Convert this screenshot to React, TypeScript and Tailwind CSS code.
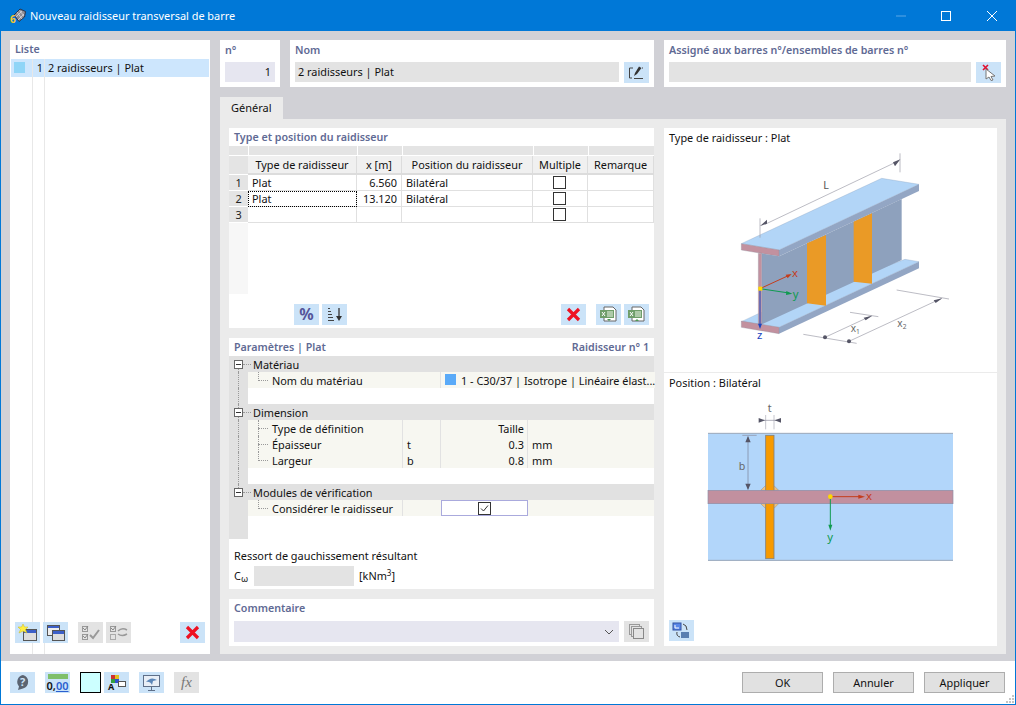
const font = { fontFamily: '"Noto Sans", sans-serif' };

function IconBtn({ children, off, className }: { children?: React.ReactNode; off?: boolean; className?: string }) {
  return (
    <div className={`w-[25px] h-[21px] flex items-center justify-center shrink-0 ${off ? "bg-[#e3e3e3]" : "bg-[#cbe3f8]"} ${className ?? ""}`}>
      {children}
    </div>
  );
}

const RedX = () => (
  <svg width="15" height="15" viewBox="0 0 15 15">
    <path d="M2 2 L13 13 M13 2 L2 13" stroke="#ee1122" strokeWidth="3.2" />
  </svg>
);

const Excel = ({ up }: { up?: boolean }) => (
  <svg width="19" height="18" viewBox="0 0 19 18">
    <path d="M5 1 H14 L17 4 V15 H5 Z" fill="#fff" stroke="#666" />
    <rect x="1" y="4" width="14" height="8" fill="#6f9e6a" />
    <path d="M3 6 L6 10 M6 6 L3 10" stroke="#fff" />
    <path d="M8 6 H14 M8 8 H14 M8 10 H14 M9 5 V11 M11 5 V11 M13 5 V11" stroke="#dcebd8" strokeWidth="0.7" />
    <path d={up ? "M8 15 L10 13 L12 15 Z" : "M8 13 L12 13 L10 15 Z"} fill="#4c9a54" />
  </svg>
);

function Check() {
  return <div className="w-[13px] h-[13px] border border-[#333] bg-white" />;
}

function Title({ children }: { children: React.ReactNode }) {
  return <div className="text-[10.7px] font-semibold text-[#5f6a94] leading-[16px] whitespace-nowrap">{children}</div>;
}

function TableRow({ n, type, x, pos, focus }: { n: string; type?: string; x?: string; pos?: string; focus?: boolean }) {
  const cell = "border-r border-b border-[#e0e0e0] h-[16px] leading-[15px] text-[10.9px] text-[#111]";
  return (
    <>
      <div className="bg-[#e4e4e4] border-b border-white text-center text-[10.9px] leading-[15px] text-[#222] h-[16px]">{n}</div>
      <div className={`${cell} pl-[4px] ${focus ? "outline-1 outline-dotted outline-black -outline-offset-1" : ""}`}>{type}</div>
      <div className={`${cell} text-right pr-[4px]`}>{x}</div>
      <div className={`${cell} pl-[4px]`}>{pos}</div>
      <div className={`${cell} flex items-center justify-center pr-[1px]`}><Check /></div>
      <div className={cell}></div>
    </>
  );
}

function Gutter({ line }: { line?: boolean }) {
  return (
    <div className="w-[19px] shrink-0 bg-[#e1e1e1] pl-[9px]">
      {line && <div className="h-full border-l border-dotted border-[#999]" />}
    </div>
  );
}

function GroupRow({ label, first, last }: { label: string; first?: boolean; last?: boolean }) {
  return (
    <div className="flex h-[16px] bg-[#e1e1e1] relative">
      {/* dotted links of the tree, behind the +/- box */}
      {!first && <div className="absolute left-[9px] top-0 h-[4px] border-l border-dotted border-[#999]" />}
      {!last && <div className="absolute left-[9px] top-[12px] h-[4px] border-l border-dotted border-[#999]" />}
      <div className="absolute left-[14px] top-[8px] w-[8px] border-t border-dotted border-[#999]" />
      <div className="w-[19px] shrink-0 flex items-center pl-[5px] relative">
        <svg width="9" height="9" viewBox="0 0 9 9">
          <rect x="0.5" y="0.5" width="8" height="8" fill="#fff" stroke="#666" />
          <path d="M2 4.5 H7" stroke="#333" />
        </svg>
      </div>
      <div className="text-[10.9px] leading-[18px] text-[#111] pl-[5px]">{label}</div>
    </div>
  );
}

function Branch({ last }: { last?: boolean }) {
  return (
    <>
      <div className={`absolute left-[10px] top-0 border-l border-dotted border-[#999] ${last ? "h-[9px]" : "h-[16px]"}`} />
      <div className="absolute left-[10px] top-[8px] w-[10px] border-t border-dotted border-[#999]" />
    </>
  );
}

function ParamRow({ label, sym, val, unit, last }: { label: string; sym?: string; val?: string; unit?: string; last?: boolean }) {
  return (
    <div className="flex h-[16px] text-[10.9px] leading-[18px] text-[#111]">
      <Gutter line />
      <div className="w-[155px] shrink-0 bg-[#f7f7f1] pl-[24px] border-r border-[#e2e2e2] relative">
        <Branch last={last} />
        {label}
      </div>
      <div className="w-[38px] shrink-0 bg-[#f7f7f1] pl-[4px] border-r border-[#e2e2e2]">{sym}</div>
      <div className="w-[87px] shrink-0 bg-[#f7f7f1] text-right pr-[3px] border-r border-[#e2e2e2]">{val}</div>
      <div className="flex-1 bg-[#f7f7f1] pl-[4px]">{unit}</div>
    </div>
  );
}

function BlankRow({ h = "h-[16px]", line }: { h?: string; line?: boolean }) {
  return (
    <div className={`flex ${h}`}>
      <Gutter line={line} />
    </div>
  );
}

function BeamDrawing() {
  return (
    <svg width="333" height="224" viewBox="-3 69 999 672" className="block">
      <path d="M229 356 L650 160 L762 178 L342 375 Z" fill="#b2d5f7" stroke="#8fa3c0" />
      <path d="M342 375 L762 178 V198 L342 394 Z" fill="#93a6c4" />
      <path d="M229 356 L342 375 V394 L229 375 Z" fill="#c2919f" stroke="#8f8f9f" />
      <path d="M229 590 L280 566 L720 403 L762 410 L342 607 Z" fill="#b2d5f7" stroke="#8fa3c0" />
      <path d="M290 385 L342 394 L710 222 V405 L290 598 Z" fill="#8ea1bd" />
      <path d="M342 607 L762 410 V430 L342 626 Z" fill="#93a6c4" />
      <path d="M229 588 L342 607 V626 L229 607 Z" fill="#c2919f" stroke="#8f8f9f" />
      <path d="M280 385 H290 V598 H280 Z" fill="#c2919f" stroke="#8f8f9f" strokeWidth="1" />
      <path d="M426 355 L483 330 V542 L426 535 Z" fill="#ea9a26" />
      <path d="M566 290 L621 265 V476 L566 470 Z" fill="#ea9a26" />
      <path d="M285 338 V280 M300 298 L700 108 M705 85 V142" stroke="#9a9aa6" strokeWidth="2" fill="none" />
      <path d="M285 303 L306 284 V296 Z M706 103 L684 112 L690 124 Z" fill="#555566" />
      <path d="M285 491 L372 451" stroke="#c43d1c" strokeWidth="3" />
      <path d="M380 447 L362 449 L368 460 Z" fill="#c43d1c" />
      <path d="M285 491 L372 504" stroke="#109a50" strokeWidth="3" />
      <path d="M382 506 L364 498 L363 510 Z" fill="#109a50" />
      <path d="M285 491 V600" stroke="#1a45c0" strokeWidth="3" />
      <path d="M285 612 L279 596 H291 Z" fill="#1a45c0" />
      <rect x="280" y="485" width="12" height="12" fill="#ffd800" />
      <text x="381" y="456" fontSize="34" fill="#c43d1c">x</text>
      <text x="383" y="518" fontSize="34" fill="#109a50">y</text>
      <text x="276" y="642" fontSize="34" fill="#1a45c0">z</text>
      <text x="475" y="193" fontSize="32" fill="#555">L</text>
      <path d="M415 628 L575 655 M480 637 L620 572 M555 562 L640 575 M552 649 L830 520 M695 495 L852 522" stroke="#9a9aa6" strokeWidth="2" fill="none" />
      <circle cx="480" cy="637" r="6" fill="#555566" />
      <circle cx="552" cy="649" r="6" fill="#555566" />
      <path d="M622 572 L596 578 L602 586 Z M832 520 L806 526 L812 534 Z" fill="#555566" />
      <text x="557" y="620" fontSize="30" fill="#666">x<tspan fontSize="20" dy="8">1</tspan></text>
      <text x="697" y="605" fontSize="30" fill="#666">x<tspan fontSize="20" dy="8">2</tspan></text>
    </svg>
  );
}

function PositionDrawing() {
  return (
    <svg width="333" height="225" viewBox="-3 69 999 675" className="block">
      <rect x="129" y="190" width="735" height="382" fill="#b2d6fa" />
      <path d="M129 190 H864 M129 571 H864" stroke="#9ba7b8" strokeWidth="3" />
      <path d="M287 361 L301 347 H327 L341 361 Z M287 401 L301 415 H327 L341 401 Z" fill="#f4c27a" stroke="#8f8f8f" strokeWidth="1.5" />
      <rect x="302" y="196" width="25" height="370" fill="#f79a00" stroke="#85817a" strokeWidth="2.5" />
      <rect x="129" y="361" width="735" height="40" fill="#c2909f" stroke="#8e8ea6" strokeWidth="2" />
      <path d="M302 135 V178 M327 135 V178" stroke="#c6c6ce" strokeWidth="3" />
      <path d="M282 151 H346" stroke="#8a8a98" strokeWidth="2" />
      <path d="M300 151 L281 144 V158 Z M329 151 L348 144 V158 Z" fill="#555566" />
      <text x="308" y="126" fontSize="32" fill="#666">t</text>
      <path d="M232 196 H275" stroke="#8a8a98" strokeWidth="2" />
      <path d="M249 200 V358" stroke="#7a7f94" strokeWidth="2" />
      <path d="M249 198 L241 217 H257 Z M249 360 L241 341 H257 Z" fill="#555566" />
      <text x="221" y="300" fontSize="32" fill="#666">b</text>
      <path d="M496 380 H590" stroke="#c43d1c" strokeWidth="3" />
      <path d="M600 380 L580 374 V386 Z" fill="#c43d1c" />
      <path d="M496 380 V470" stroke="#109a50" strokeWidth="3" />
      <path d="M496 482 L490 464 H502 Z" fill="#109a50" />
      <circle cx="496" cy="380" r="7" fill="#ffd800" />
      <text x="603" y="391" fontSize="34" fill="#c43d1c">x</text>
      <text x="487" y="514" fontSize="34" fill="#109a50">y</text>
    </svg>
  );
}

export default function App() {
  return (
    <div className="w-[1016px] h-[705px] flex flex-col bg-[#d1d1d6] border border-[#0078d7] overflow-hidden text-[#111]" style={font}>
      {/* title bar */}
      <div className="h-[30px] shrink-0 bg-[#0078d7] flex items-center text-white">
        <svg width="16" height="22" viewBox="0 -3 16 22" className="ml-[9px]">
          <path d="M4 7 L10 1 L15.5 3.5 L14.5 9 L9 13.5 Z" fill="#8d8d95" stroke="#26324a" />
          <path d="M7 4 L12 11 M9.5 2.5 L14 8 M6 9 L12 3 M8 12 L14 6" stroke="#dfe3ea" strokeWidth="0.7" />
          <text x="0" y="15" fontSize="10" fontWeight="700" fill="#f7c52c">6</text>
        </svg>
        <div className="ml-[4px] text-[10.9px] leading-[16px]">Nouveau raidisseur transversal de barre</div>
        <div className="ml-auto flex items-center">
          <svg width="46" height="30" viewBox="0 0 46 30"><path d="M19 15 H29" stroke="#5aa7e6" /></svg>
          <svg width="46" height="30" viewBox="0 0 46 30"><rect x="18.5" y="10.5" width="9" height="9" fill="none" stroke="#fff" /></svg>
          <svg width="46" height="30" viewBox="0 0 46 30"><path d="M18 10 L28 20 M28 10 L18 20" stroke="#fff" /></svg>
        </div>
      </div>

      {/* body */}
      <div className="flex-1 min-h-0 flex gap-[10px] pl-[9px] pr-[9px] pt-[9px] pb-[7px]">
        {/* list */}
        <div className="w-[200px] shrink-0 bg-white flex flex-col relative">
          <div className="pl-[5px] h-[19px] pt-[1px] text-[10.7px] leading-[17px] font-semibold text-[#5f6a94]">Liste</div>
          <div className="flex-1 mx-[1px] flex min-h-0">
            <div className="w-[22px] border-r border-[#e8e8e8]">
              <div className="h-[18px] bg-[#cde6fd] flex pl-[3px] pt-[3px]"><div className="w-[11px] h-[11px] bg-[#8fd5f7]" /></div>
            </div>
            <div className="w-[12px] border-r border-[#e8e8e8]">
              <div className="h-[18px] bg-[#cde6fd] text-right pr-[1px] text-[10.9px] leading-[18px]">1</div>
            </div>
            <div className="flex-1">
              <div className="h-[18px] bg-[#cde6fd] pl-[3px] text-[10.9px] leading-[18px]">2 raidisseurs | Plat</div>
            </div>
          </div>
          <div className="flex items-center h-[21px] mb-[11px] mx-[5px] mt-[-32px] relative">
            <IconBtn>
              <svg width="21" height="18" viewBox="0 0 21 18">
                <rect x="6.5" y="5.5" width="13" height="11" fill="#ddd" stroke="#555" />
                <rect x="7" y="6" width="12" height="3" fill="#3c5fc8" />
                <path d="M6 0 L7.5 3 L11 3 L8.5 5.5 L10 9 L6 7 L2 9 L3.5 5.5 L1 3 L4.5 3 Z" fill="#ffee44" stroke="#c8b820" strokeWidth="0.5" />
              </svg>
            </IconBtn>
            <IconBtn className="ml-[3px]">
              <svg width="21" height="18" viewBox="0 0 21 18">
                <rect x="2.5" y="1.5" width="12" height="10" fill="#eee" stroke="#555" />
                <rect x="3" y="2" width="11" height="2" fill="#3c5fc8" />
                <rect x="7.5" y="6.5" width="12" height="10" fill="#ddd" stroke="#555" />
                <rect x="8" y="7" width="11" height="3" fill="#3c5fc8" />
              </svg>
            </IconBtn>
            <IconBtn off className="ml-[10px]">
              <svg width="21" height="18" viewBox="0 0 21 18">
                <rect x="2.5" y="2.5" width="5" height="5" fill="none" stroke="#999" />
                <rect x="2.5" y="10.5" width="5" height="5" fill="none" stroke="#999" />
                <path d="M3 4 L5 6 L8 2 M3 12 L5 14 L8 10" stroke="#888" strokeWidth="1" fill="none" />
                <path d="M10 11 L13 14 L19 6" stroke="#999" strokeWidth="2" fill="none" />
              </svg>
            </IconBtn>
            <IconBtn off className="ml-[3px]">
              <svg width="21" height="18" viewBox="0 0 21 18">
                <rect x="2.5" y="2.5" width="5" height="5" fill="none" stroke="#999" />
                <rect x="2.5" y="10.5" width="5" height="5" fill="none" stroke="#aaa" />
                <path d="M3 4 L5 6 L8 2" stroke="#888" fill="none" />
                <path d="M10 7 Q14 3 19 6 M19 10 Q14 13 10 10" stroke="#999" strokeWidth="1.5" fill="none" />
              </svg>
            </IconBtn>
            <IconBtn className="ml-auto mr-[0px]"><RedX /></IconBtn>
          </div>
        </div>

        {/* main column */}
        <div className="flex-1 min-w-0 flex flex-col">
          <div className="flex gap-[10px] h-[47px] shrink-0">
            <div className="w-[60px] bg-white px-[5px] pt-[2px]">
              <Title>n°</Title>
              <div className="mt-[4px] h-[20px] bg-[#e6e6f0] text-right pr-[4px] text-[10.9px] leading-[20px]">1</div>
            </div>
            <div className="w-[364px] bg-white px-[5px] pt-[2px]">
              <Title>Nom</Title>
              <div className="flex mt-[4px] items-start">
                <div className="flex-1 h-[20px] bg-[#e3e3e3] pl-[3px] text-[10.9px] leading-[20px]">2 raidisseurs | Plat</div>
                <IconBtn className="ml-[5px]">
                  <svg width="17" height="15" viewBox="0 0 17 15">
                    <path d="M5 3 H1.5 V13 H4 M6 13.5 H15 M15 3 H14" stroke="#444" fill="none" />
                    <path d="M6 11 L7 8 L11 1.5 L13.5 3 L9 9 Z" fill="#333" />
                  </svg>
                </IconBtn>
              </div>
            </div>
            <div className="flex-1 bg-white px-[5px] pt-[2px]">
              <Title>Assigné aux barres n°/ensembles de barres n°</Title>
              <div className="flex mt-[4px] items-start">
                <div className="flex-1 h-[20px] bg-[#e3e3e3]" />
                <IconBtn className="ml-[5px]">
                  <svg width="17" height="17" viewBox="0 0 17 17">
                    <path d="M3 1 L8 6 M8 1 L3 6" stroke="#e01030" strokeWidth="1.6" />
                    <path d="M6 5 L15 12 L11 12.5 L13 16 L11 16.5 L9 13 L6 15 Z" fill="#fff" stroke="#777" />
                  </svg>
                </IconBtn>
              </div>
            </div>
          </div>

          <div className="mt-[10px] h-[22px] w-[63px] shrink-0 bg-[#ebebeb] pl-[11px] text-[11px] leading-[21px] text-[#111]">Général</div>

          <div className="flex-1 min-h-0 bg-[#ebebeb] flex gap-[10px] pl-[9px] pr-[9px] pt-[9px] pb-[8px]">
            {/* left */}
            <div className="w-[425px] shrink-0 flex flex-col gap-[10px]">
              {/* table card */}
              <div className="h-[200px] bg-white flex flex-col shrink-0">
                <div className="pl-[5px] h-[18px] pt-[1px]"><Title>Type et position du raidisseur</Title></div>
                <div className="grid grid-cols-[19px_109px_45px_131px_55px_66px] auto-rows-min">
                  <div className="h-[10px] bg-[#e4e4e4] border-b border-white" />
                  {[0, 1, 2, 3, 4].map((i) => (
                    <div key={i} className="h-[10px] bg-[#e4e4e4] border-l border-b border-white" />
                  ))}
                  <div className="h-[19px] bg-[#e4e4e4] border-b border-white" />
                  {["Type de raidisseur", "x [m]", "Position du raidisseur", "Multiple", "Remarque"].map((h) => (
                    <div key={h} className="h-[19px] bg-[#f0f0f0] border-r border-b-2 border-[#dcdcdc] text-center text-[10.9px] leading-[17px] text-[#111] whitespace-nowrap">{h}</div>
                  ))}
                  <TableRow n="1" type="Plat" x="6.560" pos="Bilatéral" />
                  <TableRow n="2" type="Plat" x="13.120" pos="Bilatéral" focus />
                  <TableRow n="3" />
                </div>
                <div className="w-[19px] h-[71px] bg-[#f7f7f7]" />
                <div className="flex mt-[10px] pl-[65px] pr-[5px] items-center">
                  <IconBtn><span className="text-[16px] font-bold text-[#55559a] leading-[21px]">%</span></IconBtn>
                  <IconBtn className="ml-[3px]">
                    <svg width="16" height="15" viewBox="0 0 16 15">
                      <path d="M1 1.5 H3 M1 4.5 H4 M1 7.5 H5 M1 10.5 H6 M1 13.5 H7" stroke="#444" />
                      <path d="M12 1 V10" stroke="#333" strokeWidth="1.3" />
                      <path d="M9 9 H15 L12 14 Z" fill="#333" />
                    </svg>
                  </IconBtn>
                  <IconBtn className="ml-auto"><RedX /></IconBtn>
                  <IconBtn className="ml-[10px]"><Excel /></IconBtn>
                  <IconBtn className="ml-[3px]"><Excel up /></IconBtn>
                </div>
              </div>

              {/* params card */}
              <div className="h-[251px] bg-white flex flex-col shrink-0">
                <div className="h-[18px] px-[5px] pt-[1px] flex justify-between">
                  <Title>Paramètres | Plat</Title>
                  <Title>Raidisseur n° 1</Title>
                </div>
                <GroupRow label="Matériau" first />
                <div className="flex h-[16px] text-[10.9px] leading-[18px]">
                  <Gutter line />
                  <div className="w-[193px] shrink-0 bg-[#f7f7f1] pl-[24px] border-r border-[#e2e2e2] relative">
                    <Branch last />
                    Nom du matériau
                  </div>
                  <div className="flex-1 bg-[#f7f7f1] flex pl-[4px] whitespace-nowrap">
                    <div className="w-[11px] h-[11px] mt-[2px] bg-[#5aaaf8] mr-[5px] shrink-0" />
                    <span>1 - C30/37 | Isotrope | Linéaire élast...</span>
                  </div>
                </div>
                <BlankRow line />
                <GroupRow label="Dimension" />
                <ParamRow label="Type de définition" val="Taille" />
                <ParamRow label="Épaisseur" sym="t" val="0.3" unit="mm" />
                <ParamRow label="Largeur" sym="b" val="0.8" unit="mm" last />
                <BlankRow line />
                <GroupRow label="Modules de vérification" last />
                <div className="flex h-[16px] text-[10.9px] leading-[18px]">
                  <Gutter />
                  <div className="w-[155px] shrink-0 bg-[#f7f7f1] pl-[24px] border-r border-[#e2e2e2] whitespace-nowrap relative">
                    <Branch last />
                    Considérer le raidisseur
                  </div>
                  <div className="w-[38px] shrink-0 bg-[#f7f7f1]" />
                  <div className="w-[87px] shrink-0 bg-white border border-[#aaaadd] flex items-center justify-center">
                    <svg width="13" height="13" viewBox="0 0 13 13">
                      <rect x="0.5" y="0.5" width="12" height="12" fill="#fff" stroke="#333" />
                      <path d="M3 6.5 L5.5 9 L10 3.5" stroke="#333" fill="none" />
                    </svg>
                  </div>
                  <div className="flex-1 bg-[#f7f7f1]" />
                </div>
                <BlankRow h="h-[23px]" />
                <div className="pl-[5px] mt-[9px] text-[10.9px] leading-[16px]">Ressort de gauchissement résultant</div>
                <div className="flex items-center pl-[5px] mt-[2px] text-[10.9px]">
                  <span className="w-[20px]">C<sub className="text-[9px]">ω</sub></span>
                  <div className="w-[100px] h-[20px] bg-[#e3e3e3]" />
                  <span className="ml-[5px]">[kNm<sup className="text-[8px]">3</sup>]</span>
                </div>
              </div>

              {/* comment card */}
              <div className="flex-1 bg-white px-[5px] pt-[1px]">
                <Title>Commentaire</Title>
                <div className="flex mt-[5px] items-start">
                  <div className="flex-1 h-[21px] bg-[#e6e6f0] flex items-center justify-end pr-[5px]">
                    <svg width="10" height="6" viewBox="0 0 10 6"><path d="M1 1 L5 5 L9 1" stroke="#555" fill="none" /></svg>
                  </div>
                  <IconBtn off className="ml-[5px]">
                    <svg width="17" height="17" viewBox="0 0 17 17">
                      <rect x="1.5" y="1.5" width="10" height="10" fill="none" stroke="#999" />
                      <rect x="3.5" y="3.5" width="10" height="10" fill="#e3e3e3" stroke="#999" />
                      <rect x="5.5" y="5.5" width="10" height="10" fill="#e3e3e3" stroke="#888" />
                    </svg>
                  </IconBtn>
                </div>
              </div>
            </div>

            {/* right */}
            <div className="flex-1 min-w-0 bg-white flex flex-col">
              <div className="h-[245px] shrink-0 border-b border-[#ebebeb]">
                <div className="h-[20px] pl-[5px] text-[10.9px] leading-[19px]">Type de raidisseur : Plat</div>
                <BeamDrawing />
              </div>
              <div className="flex-1 min-h-0 flex flex-col">
                <div className="h-[20px] pl-[5px] text-[10.9px] leading-[19px]">Position : Bilatéral</div>
                <div className="flex-1 min-h-0 overflow-hidden"><PositionDrawing /></div>
                <IconBtn className="ml-[5px] mb-[5px]">
                  <svg width="19" height="17" viewBox="0 0 19 17">
                    <rect x="1" y="1" width="8" height="7" fill="#5a88e8" stroke="#3050a0" />
                    <path d="M3 3 V6 H7" stroke="#fff" fill="none" />
                    <rect x="9" y="10" width="8" height="6" fill="#5a7fb0" />
                    <path d="M11 2 Q15 3 15 8 M5 10 Q4 14 8 15" stroke="#444" fill="none" />
                  </svg>
                </IconBtn>
              </div>
            </div>
          </div>
        </div>
      </div>

      {/* bottom bar */}
      <div className="h-[43px] shrink-0 bg-white flex items-center pl-[9px] pr-[10px] relative">
        <IconBtn>
          <svg width="17" height="17" viewBox="0 0 17 17">
            <path d="M9 1 A7 7 0 0 1 9 14.5 L4 16 L5 12.5 A7 7 0 0 1 9 1 Z" fill="#5b6472" />
            <text x="6" y="12" fontSize="11" fontWeight="700" fill="#cbe3f8">?</text>
          </svg>
        </IconBtn>
        <IconBtn className="ml-[10px]">
          <div className="flex flex-col items-center leading-none">
            <div className="w-[20px] h-[5px] bg-[#7fbf6a]" />
            <span className="text-[11px] font-semibold leading-[13px]">0,<span className="text-[#2a5fd0] underline">00</span></span>
          </div>
        </IconBtn>
        <div className="ml-[10px] w-[21px] h-[21px] bg-[#ccffff] border border-black" />
        <IconBtn className="ml-[3px]">
          <svg width="19" height="18" viewBox="0 0 19 18">
            <rect x="4" y="1" width="4" height="4" fill="#d03030" />
            <rect x="8" y="1" width="4" height="4" fill="#e0c020" />
            <rect x="4" y="5" width="4" height="4" fill="#30a040" />
            <rect x="8" y="5" width="4" height="4" fill="#3050d0" />
            <rect x="11.5" y="7.5" width="7" height="5" fill="#fff" stroke="#555" />
            <text x="1" y="16" fontSize="9" fontWeight="700" fill="#111">A</text>
          </svg>
        </IconBtn>
        <IconBtn className="ml-[10px]">
          <svg width="19" height="18" viewBox="0 0 19 18">
            <rect x="1.5" y="1.5" width="16" height="11" fill="#e8eef6" stroke="#5f6f88" />
            <path d="M4 8 Q9 2 15 6 L11 7 L10 11 Q8 7 4 8 Z" fill="#5b86b8" />
            <path d="M9.5 13 V16 M6 16.5 H13" stroke="#5f6f88" />
          </svg>
        </IconBtn>
        <IconBtn off className="ml-[10px]">
          <span className="text-[15px] italic text-[#777]" style={{ fontFamily: '"Liberation Serif", serif' }}>fx</span>
        </IconBtn>
        <div className="ml-auto flex gap-[10px]">
          {["OK", "Annuler", "Appliquer"].map((b) => (
            <div key={b} className="w-[81px] h-[21px] bg-[#e1e1e1] border border-[#adadad] text-center text-[10.9px] leading-[19px] text-[#111]">{b}</div>
          ))}
        </div>
        {/* resize grip */}
        <svg width="10" height="10" viewBox="0 0 10 10" className="absolute right-0 bottom-0">
          <path d="M7 1 h2 v2 h-2 Z M4 4 h2 v2 h-2 Z M7 4 h2 v2 h-2 Z M1 7 h2 v2 h-2 Z M4 7 h2 v2 h-2 Z M7 7 h2 v2 h-2 Z" fill="#c4c4c4" />
        </svg>
      </div>
    </div>
  );
}
